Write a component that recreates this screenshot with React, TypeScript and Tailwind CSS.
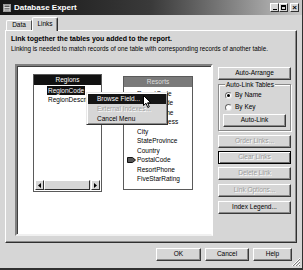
import React from "react";

const FONT = { fontFamily: '"Liberation Sans", Arial, sans-serif' };

function Btn({
  label,
  disabled,
  dflt,
  className = "",
}: {
  label: string;
  disabled?: boolean;
  dflt?: boolean;
  className?: string;
}) {
  return (
    <div
      className={
        "flex items-center justify-center bg-[#d6d6d6] text-[6.5px] leading-none " +
        (dflt
          ? "border border-black shadow-[inset_1px_1px_0_#ffffff,inset_-1px_-1px_0_#6a6a6a] "
          : "border border-t-white border-l-white border-r-[#3a3a3a] border-b-[#3a3a3a] shadow-[inset_-1px_-1px_0_#8a8a8a] ") +
        (disabled ? "text-[#9c9c9c] [text-shadow:1px_1px_0_#ffffff] " : "text-black ") +
        className
      }
    >
      {label}
    </div>
  );
}

function Radio({ checked, label }: { checked?: boolean; label: string }) {
  return (
    <div className="flex items-center h-[10px] pl-[6px]">
      <div className="w-[7px] h-[7px] rounded-full bg-white border border-t-[#6a6a6a] border-l-[#6a6a6a] border-r-[#e8e8e8] border-b-[#e8e8e8] flex items-center justify-center">
        {checked && <div className="w-[3px] h-[3px] rounded-full bg-black" />}
      </div>
      <span className="ml-[3px] text-[6.5px] leading-none text-black">{label}</span>
    </div>
  );
}

const resortFields = [
  "ResortCode",
  "RegionCode",
  "ResortName",
  "StreetAddress",
  "City",
  "StateProvince",
  "Country",
  "PostalCode",
  "ResortPhone",
  "FiveStarRating",
];

export default function App() {
  return (
    <div
      className="w-[303px] h-[270px] bg-[#d6d6d6] overflow-hidden flex flex-col border-b-2 border-r border-b-[#303030] border-r-[#303030] relative"
      style={FONT}
    >
      {/* Title bar */}
      <div className="h-[15px] shrink-0 flex items-center bg-gradient-to-r from-[#141414] via-[#3a3a3a] to-[#c8c8c8] pl-[3px] pr-[3px]">
        <svg width="8" height="8" viewBox="0 0 8 8" className="shrink-0">
          <rect x="0.5" y="0.5" width="7" height="7" fill="#d8d8d8" stroke="#9a9a9a" />
          <rect x="1.5" y="1.5" width="5" height="1.5" fill="#5a5a5a" />
          <line x1="1.5" y1="4.5" x2="6.5" y2="4.5" stroke="#7a7a7a" />
          <line x1="1.5" y1="6" x2="6.5" y2="6" stroke="#7a7a7a" />
        </svg>
        <span className="ml-[3px] text-white font-bold text-[8px] leading-none">Database Expert</span>
        <div className="ml-auto flex items-center">
          <div className="w-[9px] h-[9px] bg-[#d6d6d6] border border-t-white border-l-white border-r-[#303030] border-b-[#303030] flex items-end justify-center pb-[1px]">
            <div className="w-[4px] h-[1.5px] bg-black" />
          </div>
          <div className="w-[9px] h-[9px] bg-[#d6d6d6] border border-t-white border-l-white border-r-[#303030] border-b-[#303030] flex items-center justify-center">
            <div className="w-[5px] h-[5px] border border-black border-t-2" />
          </div>
          <div className="ml-[2px] w-[9px] h-[9px] bg-[#d6d6d6] border border-t-white border-l-white border-r-[#303030] border-b-[#303030] flex items-center justify-center text-[8px] leading-none font-bold text-black">
            ×
          </div>
        </div>
      </div>

      {/* Tabs */}
      <div className="h-[15px] shrink-0 flex items-end pl-[6px] relative z-10">
        <div className="w-[26px] h-[10px] border-t border-l border-t-white border-l-white border-r border-r-[#505050] rounded-tl-[2px] flex items-center justify-center text-[6.5px] leading-none text-black">
          Data
        </div>
        <div className="w-[26px] h-[14px] -mb-[1px] bg-[#d6d6d6] border-t border-l border-t-white border-l-white border-r border-r-[#303030] shadow-[inset_-1px_0_0_#8a8a8a] rounded-tl-[2px] rounded-tr-[2px] flex items-center justify-center text-[6.5px] leading-none text-black pb-[1px]">
          Links
        </div>
      </div>

      {/* Panel */}
      <div className="ml-[5px] w-[292px] h-[213px] shrink-0 border border-t-white border-l-white border-r-[#303030] border-b-[#303030] shadow-[inset_-1px_-1px_0_#8a8a8a] flex flex-col">
        <div className="pl-[5px] pt-[3px] leading-[10px]">
          <div className="font-bold text-[7px] text-black">
            Link together the tables you added to the report.
          </div>
          <div className="text-[6.3px] text-black whitespace-nowrap">
            Linking is needed to match records of one table with corresponding records of another table.
          </div>
        </div>
        <div className="flex mt-[10px]">
          {/* Canvas */}
          <div className="ml-[9px] w-[198px] h-[172px] border-2 border-t-[#808080] border-l-[#808080] border-r-white border-b-[#f0f0f0] shadow-[inset_1px_1px_0_#404040] bg-white relative overflow-hidden">
            {/* Regions */}
            <div className="absolute left-[16px] top-[8px] w-[69px] h-[118px] border border-[#5a5a5a] bg-white flex flex-col">
              <div className="h-[10px] bg-[#111111] text-white text-[6.5px] leading-[10px] text-center">Regions</div>
              <div className="flex-1 pt-[1px] text-[6.5px] leading-[9px] text-black">
                <div className="h-[9px] pl-[13px]">
                  <span className="bg-[#111111] text-white px-[1px] inline-block">RegionCode</span>
                </div>
                <div className="h-[9px] pl-[14px] whitespace-nowrap">RegionDescription</div>
              </div>
              <div className="h-[10px] mx-[1px] mb-[1px] flex bg-[#e4e4e4]">
                <div className="w-[9px] h-[10px] bg-[#d6d6d6] border border-t-white border-l-white border-r-[#303030] border-b-[#303030] flex items-center justify-center">
                  <svg width="3" height="5" viewBox="0 0 3 5">
                    <polygon points="3,0 0,2.5 3,5" fill="black" />
                  </svg>
                </div>
                <div className="w-[46px] h-[10px] bg-[#d6d6d6] border border-t-white border-l-white border-r-[#303030] border-b-[#303030]" />
                <div className="flex-1" />
                <div className="w-[9px] h-[10px] bg-[#d6d6d6] border border-t-white border-l-white border-r-[#303030] border-b-[#303030] flex items-center justify-center">
                  <svg width="3" height="5" viewBox="0 0 3 5">
                    <polygon points="0,0 3,2.5 0,5" fill="black" />
                  </svg>
                </div>
              </div>
            </div>

            {/* Resorts */}
            <div className="absolute left-[106px] top-[10px] w-[70px] h-[114px] border border-[#5a5a5a] bg-white flex flex-col">
              <div className="h-[10px] bg-[#7a7a7a] text-[#dedede] text-[6.5px] leading-[10px] text-center">Resorts</div>
              <div className="pt-[1.5px] text-[6.5px] text-black">
                {resortFields.map((f) => (
                  <div key={f} className="h-[9.5px] leading-[9.5px] flex items-center relative pl-[13px] whitespace-nowrap">
                    {f === "PostalCode" && (
                      <svg width="9" height="6" viewBox="0 0 9 6" className="absolute left-[3px] top-[2px]">
                        <polygon points="0.5,0.5 5.5,0.5 8.5,3 5.5,5.5 0.5,5.5" fill="#555555" stroke="#111111" strokeWidth="1" />
                      </svg>
                    )}
                    {f}
                  </div>
                ))}
              </div>
            </div>

            {/* Context menu */}
            <div className="absolute left-[69px] top-[26px] w-[82px] h-[33px] bg-[#d6d6d6] border border-t-[#e8e8e8] border-l-[#e8e8e8] border-r-[#303030] border-b-[#303030] shadow-[inset_1px_1px_0_#ffffff,inset_-1px_-1px_0_#8a8a8a] p-[1px] text-[6.5px]">
              <div className="h-[10px] leading-[10px] bg-[#151515] text-white pl-[9px]">Browse Field...</div>
              <div className="h-[10px] leading-[10px] text-[#a0a0a0] [text-shadow:1px_1px_0_#ffffff] pl-[9px]">External Indexes...</div>
              <div className="h-[10px] leading-[10px] text-black pl-[9px]">Cancel Menu</div>
            </div>

            {/* Cursor */}
            <svg width="9" height="14" viewBox="0 0 9 14" className="absolute left-[126px] top-[29px]">
              <polygon points="0.5,0.5 0.5,10.5 3,8.3 4.8,12.5 6.3,11.8 4.6,7.8 7.8,7.8" fill="white" stroke="black" strokeWidth="1" strokeLinejoin="miter" />
            </svg>
          </div>

          {/* Right column */}
          <div className="ml-[5px] w-[73px] pt-[3px] flex flex-col">
            <Btn label="Auto-Arrange" className="h-[13px]" />
            <div className="mt-[4px] relative border border-[#8a8a8a] shadow-[inset_1px_1px_0_#ffffff,1px_1px_0_#ffffff] pt-[5px] pb-[3px]">
              <div className="absolute left-[6px] -top-[4px] bg-[#d6d6d6] px-[1px] text-[6.5px] leading-[7px] text-black">
                Auto-Link Tables
              </div>
              <Radio checked label="By Name" />
              <div className="mt-[2px]">
                <Radio label="By Key" />
              </div>
              <Btn label="Auto-Link" className="h-[13px] mt-[2px] mx-[4px]" />
            </div>
            <Btn label="Order Links..." disabled className="h-[13px] mt-[4px]" />
            <Btn label="Clear Links" disabled dflt className="h-[13px] mt-[3px]" />
            <Btn label="Delete Link" disabled className="h-[13px] mt-[3px]" />
            <Btn label="Link Options..." disabled className="h-[13px] mt-[4px]" />
            <Btn label="Index Legend..." className="h-[13px] mt-[4px]" />
          </div>
        </div>
      </div>

      {/* Bottom buttons */}
      <div className="mt-[5px] flex pl-[156px] gap-[4px]">
        <Btn label="OK" className="w-[45px] h-[13px]" />
        <Btn label="Cancel" className="w-[44px] h-[13px]" />
        <Btn label="Help" className="w-[39px] h-[13px]" />
      </div>

      {/* Size grip */}
      <svg width="10" height="10" viewBox="0 0 10 10" className="absolute right-[1px] bottom-[1px]">
        <line x1="9" y1="1" x2="1" y2="9" stroke="#ffffff" />
        <line x1="9" y1="2" x2="2" y2="9" stroke="#808080" />
        <line x1="9" y1="4" x2="4" y2="9" stroke="#ffffff" />
        <line x1="9" y1="5" x2="5" y2="9" stroke="#808080" />
        <line x1="9" y1="7" x2="7" y2="9" stroke="#ffffff" />
        <line x1="9" y1="8" x2="8" y2="9" stroke="#808080" />
      </svg>
    </div>
  );
}
